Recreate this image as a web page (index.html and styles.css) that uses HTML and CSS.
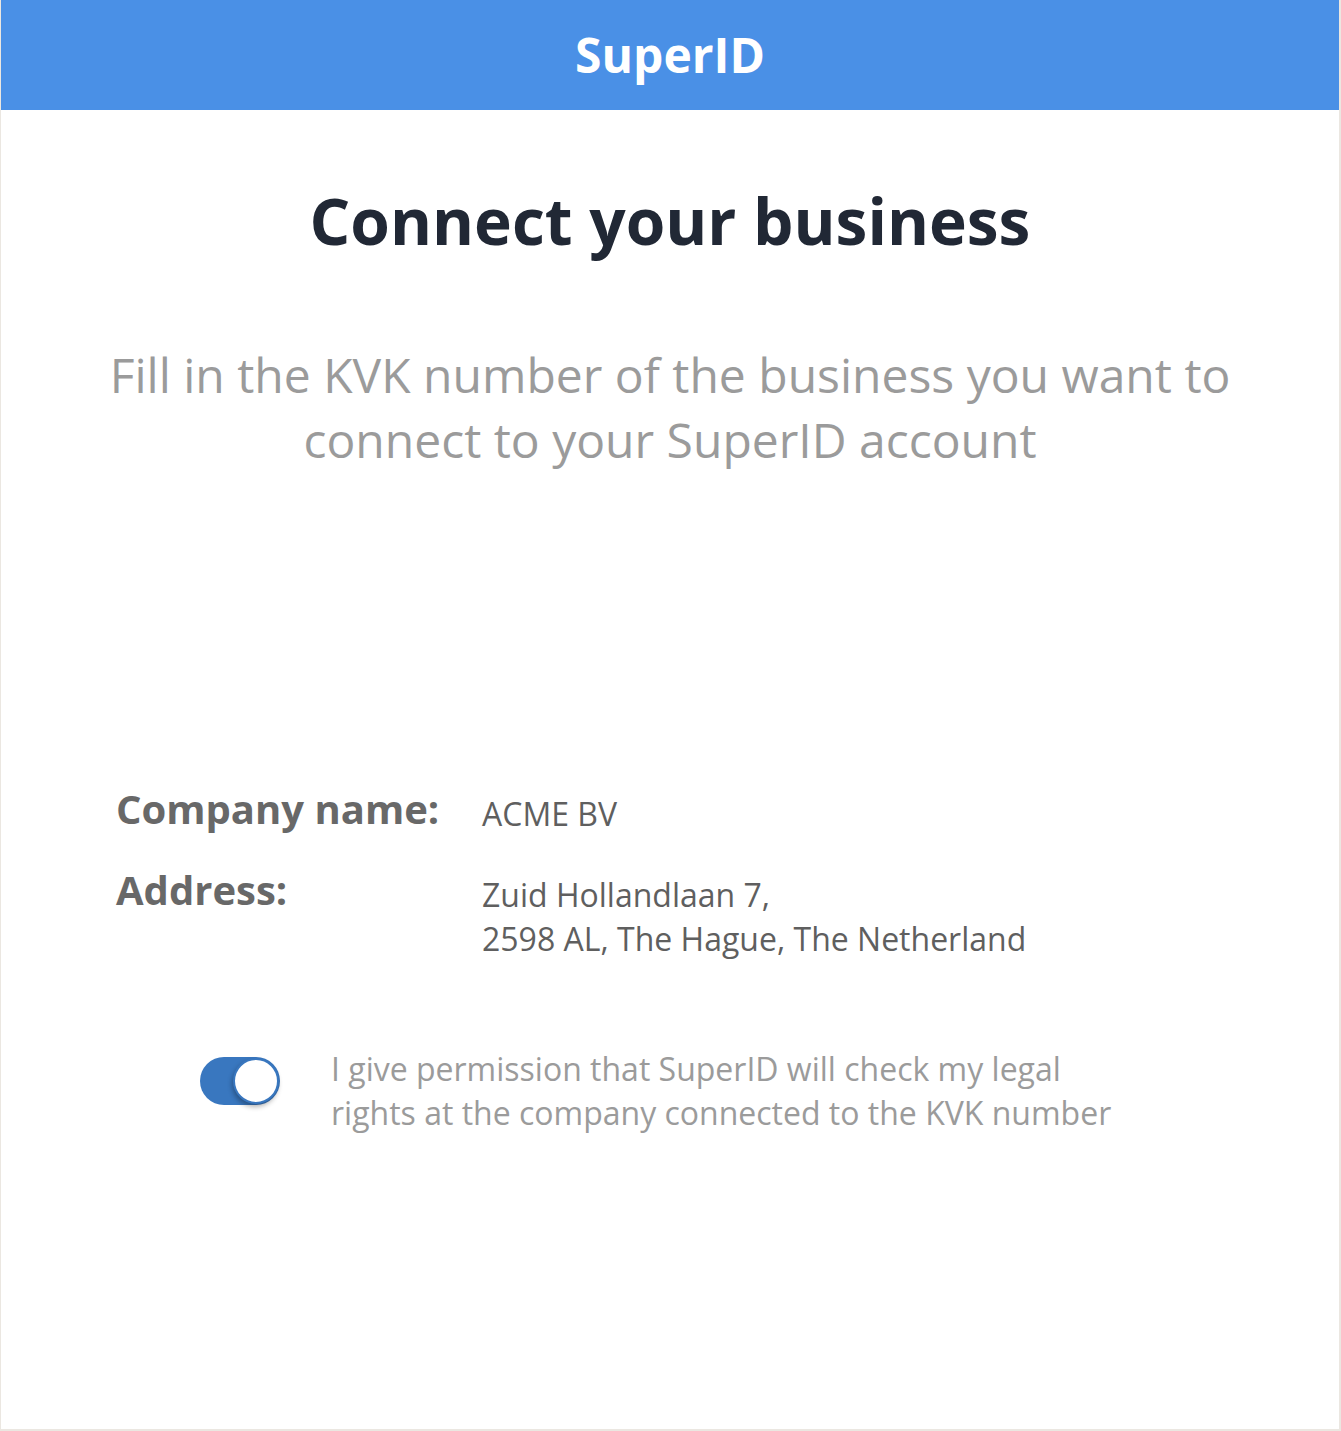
FILE: index.html
```html
<!DOCTYPE html>
<html lang="en">
<head>
<meta charset="utf-8">
<title>SuperID - Connect your business</title>
<link rel="stylesheet" href="styles.css">
</head>
<body>
<div class="page">
  <header class="topbar">SuperID</header>
  <main class="content">
    <h1 class="title">Connect your business</h1>
    <p class="intro">Fill in the KVK number of the business you want to<br>connect to your SuperID account</p>
    <dl class="details">
      <div class="row">
        <dt class="label">Company name:</dt>
        <dd class="value">ACME BV</dd>
      </div>
      <div class="row">
        <dt class="label">Address:</dt>
        <dd class="value">Zuid Hollandlaan 7,<br>2598 AL, The Hague, The Netherland</dd>
      </div>
    </dl>
    <div class="consent">
      <span class="toggle"><span class="knob"></span></span>
      <p class="consent-text">I give permission that SuperID will check my legal<br>rights at the company connected to the KVK number</p>
    </div>
  </main>
</div>
</body>
</html>
```

FILE: styles.css
```css
* { box-sizing: border-box; }
html, body { margin: 0; padding: 0; background: #fff; }
body { font-family: "Open Sans", "Noto Sans", sans-serif; }

.page {
  width: 1341px;
  height: 1431px;
  border-left: 1px solid #ebe7e1;
  border-right: 2px solid #ebe7e1;
  border-bottom: 2px solid #ebe7e1;
  background: #fff;
}

.topbar {
  height: 110px;
  background: #4a90e6;
  color: #fff;
  font-weight: 700;
  font-size: 48px;
  line-height: 110px;
  text-align: center;
}

.content {
  display: flex;
  flex-direction: column;
  align-items: stretch;
}

.title {
  margin: 67px 0 0;
  font-size: 64px;
  line-height: 88px;
  font-weight: 700;
  color: #212835;
  text-align: center;
}

.intro {
  margin: 77px 0 0;
  font-size: 48px;
  line-height: 65px;
  font-weight: 400;
  color: #9b9b9b;
  text-align: center;
}

.details {
  margin: 311px 0 0 115px;
  padding: 0;
}

.row {
  display: flex;
  align-items: flex-start;
  margin-bottom: 28px;
}

.label {
  width: 366px;
  margin: 0;
  font-size: 40px;
  line-height: 52px;
  font-weight: 700;
  color: #686868;
}

.value {
  margin: 0;
  padding-top: 9px;
  font-size: 32px;
  line-height: 44px;
  color: #5f5f5f;
}

.consent {
  display: flex;
  align-items: flex-start;
  margin: 58px 0 0 199px;
}

.toggle {
  position: relative;
  flex: none;
  width: 80px;
  height: 48px;
  border-radius: 24px;
  background: #3977bf;
  margin-top: 10px;
}

.knob {
  position: absolute;
  right: 1px;
  top: 1px;
  width: 46px;
  height: 46px;
  border-radius: 50%;
  background: #fff;
  border: 2px solid #3977bf;
  box-shadow: -1px 3px 5px rgba(0,0,0,0.3);
}

.consent-text {
  margin: 0 0 0 51px;
  font-size: 32px;
  line-height: 44px;
  color: #9b9b9b;
}
```
